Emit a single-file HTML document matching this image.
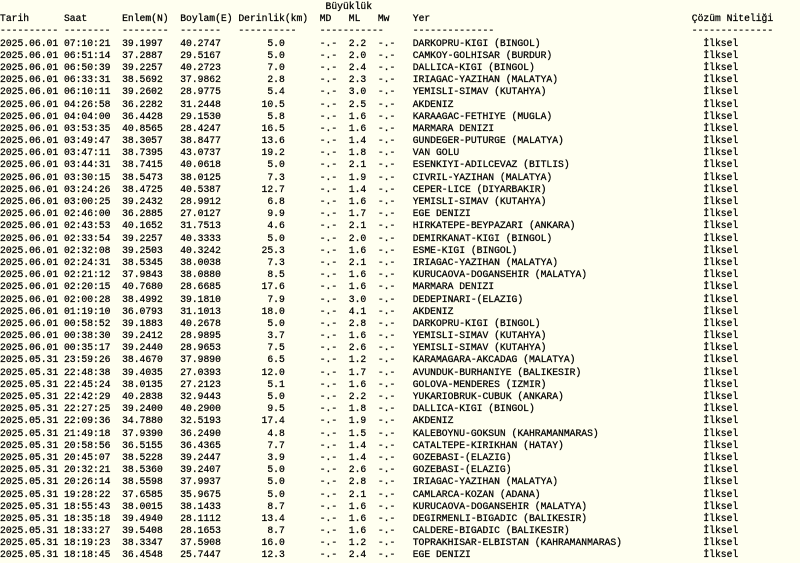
<!DOCTYPE html>
<html><head><meta charset="utf-8"><style>
html,body{margin:0;padding:0;background:#fffff0;width:800px;height:563px;overflow:hidden}
.w{font-family:"Liberation Mono",monospace;font-size:9.7px;line-height:12.19px;color:#000;padding-top:1px;-webkit-text-stroke:0.25px #000}
pre{margin:0;font:inherit;white-space:pre}
p{margin:0;height:12.19px;white-space:nowrap}
p b{font-weight:normal;display:inline-block}
p b:nth-child(1){width:11ch}
p b:nth-child(2){width:10ch}
p b:nth-child(3){width:10ch}
p b:nth-child(4){width:7ch}
p b:nth-child(5){width:11ch;text-align:right}
p b:nth-child(6){width:5ch;margin-left:6ch}
p b:nth-child(7){width:5ch}
p b:nth-child(8){width:6ch}
p b:nth-child(9){width:50ch}
</style></head><body><div class="w"><pre>                                                        Büyüklük
Tarih      Saat      Enlem(N)  Boylam(E) Derinlik(km)  MD   ML   Mw    Yer                                             Çözüm Niteliği
---------- --------  --------  -------   ----------    -----------     --------------                                  --------------</pre><p><b>2025.06.01</b><b>07:10:21</b><b>39.1997</b><b>40.2747</b><b>5.0</b><b>-.-</b><b>2.2</b><b>-.-</b><b>DARKOPRU-KIGI (BINGOL)</b><b>İlksel</b></p><p><b>2025.06.01</b><b>06:51:14</b><b>37.2887</b><b>29.5167</b><b>5.0</b><b>-.-</b><b>2.0</b><b>-.-</b><b>CAMKOY-GOLHISAR (BURDUR)</b><b>İlksel</b></p><p><b>2025.06.01</b><b>06:50:39</b><b>39.2257</b><b>40.2723</b><b>7.0</b><b>-.-</b><b>2.4</b><b>-.-</b><b>DALLICA-KIGI (BINGOL)</b><b>İlksel</b></p><p><b>2025.06.01</b><b>06:33:31</b><b>38.5692</b><b>37.9862</b><b>2.8</b><b>-.-</b><b>2.3</b><b>-.-</b><b>IRIAGAC-YAZIHAN (MALATYA)</b><b>İlksel</b></p><p><b>2025.06.01</b><b>06:10:11</b><b>39.2602</b><b>28.9775</b><b>5.4</b><b>-.-</b><b>3.0</b><b>-.-</b><b>YEMISLI-SIMAV (KUTAHYA)</b><b>İlksel</b></p><p><b>2025.06.01</b><b>04:26:58</b><b>36.2282</b><b>31.2448</b><b>10.5</b><b>-.-</b><b>2.5</b><b>-.-</b><b>AKDENIZ</b><b>İlksel</b></p><p><b>2025.06.01</b><b>04:04:00</b><b>36.4428</b><b>29.1530</b><b>5.8</b><b>-.-</b><b>1.6</b><b>-.-</b><b>KARAAGAC-FETHIYE (MUGLA)</b><b>İlksel</b></p><p><b>2025.06.01</b><b>03:53:35</b><b>40.8565</b><b>28.4247</b><b>16.5</b><b>-.-</b><b>1.6</b><b>-.-</b><b>MARMARA DENIZI</b><b>İlksel</b></p><p><b>2025.06.01</b><b>03:49:47</b><b>38.3057</b><b>38.8477</b><b>13.6</b><b>-.-</b><b>1.4</b><b>-.-</b><b>GUNDEGER-PUTURGE (MALATYA)</b><b>İlksel</b></p><p><b>2025.06.01</b><b>03:47:11</b><b>38.7395</b><b>43.0737</b><b>19.2</b><b>-.-</b><b>1.8</b><b>-.-</b><b>VAN GOLU</b><b>İlksel</b></p><p><b>2025.06.01</b><b>03:44:31</b><b>38.7415</b><b>40.0618</b><b>5.0</b><b>-.-</b><b>2.1</b><b>-.-</b><b>ESENKIYI-ADILCEVAZ (BITLIS)</b><b>İlksel</b></p><p><b>2025.06.01</b><b>03:30:15</b><b>38.5473</b><b>38.0125</b><b>7.3</b><b>-.-</b><b>1.9</b><b>-.-</b><b>CIVRIL-YAZIHAN (MALATYA)</b><b>İlksel</b></p><p><b>2025.06.01</b><b>03:24:26</b><b>38.4725</b><b>40.5387</b><b>12.7</b><b>-.-</b><b>1.4</b><b>-.-</b><b>CEPER-LICE (DIYARBAKIR)</b><b>İlksel</b></p><p><b>2025.06.01</b><b>03:00:25</b><b>39.2432</b><b>28.9912</b><b>6.8</b><b>-.-</b><b>1.6</b><b>-.-</b><b>YEMISLI-SIMAV (KUTAHYA)</b><b>İlksel</b></p><p><b>2025.06.01</b><b>02:46:00</b><b>36.2885</b><b>27.0127</b><b>9.9</b><b>-.-</b><b>1.7</b><b>-.-</b><b>EGE DENIZI</b><b>İlksel</b></p><p><b>2025.06.01</b><b>02:43:53</b><b>40.1652</b><b>31.7513</b><b>4.6</b><b>-.-</b><b>2.1</b><b>-.-</b><b>HIRKATEPE-BEYPAZARI (ANKARA)</b><b>İlksel</b></p><p><b>2025.06.01</b><b>02:33:54</b><b>39.2257</b><b>40.3333</b><b>5.0</b><b>-.-</b><b>2.0</b><b>-.-</b><b>DEMIRKANAT-KIGI (BINGOL)</b><b>İlksel</b></p><p><b>2025.06.01</b><b>02:32:08</b><b>39.2503</b><b>40.3242</b><b>25.3</b><b>-.-</b><b>1.6</b><b>-.-</b><b>ESME-KIGI (BINGOL)</b><b>İlksel</b></p><p><b>2025.06.01</b><b>02:24:31</b><b>38.5345</b><b>38.0038</b><b>7.3</b><b>-.-</b><b>2.1</b><b>-.-</b><b>IRIAGAC-YAZIHAN (MALATYA)</b><b>İlksel</b></p><p><b>2025.06.01</b><b>02:21:12</b><b>37.9843</b><b>38.0880</b><b>8.5</b><b>-.-</b><b>1.6</b><b>-.-</b><b>KURUCAOVA-DOGANSEHIR (MALATYA)</b><b>İlksel</b></p><p><b>2025.06.01</b><b>02:20:15</b><b>40.7680</b><b>28.6685</b><b>17.6</b><b>-.-</b><b>1.6</b><b>-.-</b><b>MARMARA DENIZI</b><b>İlksel</b></p><p><b>2025.06.01</b><b>02:00:28</b><b>38.4992</b><b>39.1810</b><b>7.9</b><b>-.-</b><b>3.0</b><b>-.-</b><b>DEDEPINARI-(ELAZIG)</b><b>İlksel</b></p><p><b>2025.06.01</b><b>01:19:10</b><b>36.0793</b><b>31.1013</b><b>18.0</b><b>-.-</b><b>4.1</b><b>-.-</b><b>AKDENIZ</b><b>İlksel</b></p><p><b>2025.06.01</b><b>00:58:52</b><b>39.1883</b><b>40.2678</b><b>5.0</b><b>-.-</b><b>2.8</b><b>-.-</b><b>DARKOPRU-KIGI (BINGOL)</b><b>İlksel</b></p><p><b>2025.06.01</b><b>00:38:30</b><b>39.2412</b><b>28.9895</b><b>3.7</b><b>-.-</b><b>1.6</b><b>-.-</b><b>YEMISLI-SIMAV (KUTAHYA)</b><b>İlksel</b></p><p><b>2025.06.01</b><b>00:35:17</b><b>39.2440</b><b>28.9653</b><b>7.5</b><b>-.-</b><b>2.6</b><b>-.-</b><b>YEMISLI-SIMAV (KUTAHYA)</b><b>İlksel</b></p><p><b>2025.05.31</b><b>23:59:26</b><b>38.4670</b><b>37.9890</b><b>6.5</b><b>-.-</b><b>1.2</b><b>-.-</b><b>KARAMAGARA-AKCADAG (MALATYA)</b><b>İlksel</b></p><p><b>2025.05.31</b><b>22:48:38</b><b>39.4035</b><b>27.0393</b><b>12.0</b><b>-.-</b><b>1.7</b><b>-.-</b><b>AVUNDUK-BURHANIYE (BALIKESIR)</b><b>İlksel</b></p><p><b>2025.05.31</b><b>22:45:24</b><b>38.0135</b><b>27.2123</b><b>5.1</b><b>-.-</b><b>1.6</b><b>-.-</b><b>GOLOVA-MENDERES (IZMIR)</b><b>İlksel</b></p><p><b>2025.05.31</b><b>22:42:29</b><b>40.2838</b><b>32.9443</b><b>5.0</b><b>-.-</b><b>2.2</b><b>-.-</b><b>YUKARIOBRUK-CUBUK (ANKARA)</b><b>İlksel</b></p><p><b>2025.05.31</b><b>22:27:25</b><b>39.2400</b><b>40.2900</b><b>9.5</b><b>-.-</b><b>1.8</b><b>-.-</b><b>DALLICA-KIGI (BINGOL)</b><b>İlksel</b></p><p><b>2025.05.31</b><b>22:09:36</b><b>34.7880</b><b>32.5193</b><b>17.4</b><b>-.-</b><b>1.9</b><b>-.-</b><b>AKDENIZ</b><b>İlksel</b></p><p><b>2025.05.31</b><b>21:49:18</b><b>37.9390</b><b>36.2490</b><b>4.8</b><b>-.-</b><b>1.5</b><b>-.-</b><b>KALEBOYNU-GOKSUN (KAHRAMANMARAS)</b><b>İlksel</b></p><p><b>2025.05.31</b><b>20:58:56</b><b>36.5155</b><b>36.4365</b><b>7.7</b><b>-.-</b><b>1.4</b><b>-.-</b><b>CATALTEPE-KIRIKHAN (HATAY)</b><b>İlksel</b></p><p><b>2025.05.31</b><b>20:45:07</b><b>38.5228</b><b>39.2447</b><b>3.9</b><b>-.-</b><b>1.4</b><b>-.-</b><b>GOZEBASI-(ELAZIG)</b><b>İlksel</b></p><p><b>2025.05.31</b><b>20:32:21</b><b>38.5360</b><b>39.2407</b><b>5.0</b><b>-.-</b><b>2.6</b><b>-.-</b><b>GOZEBASI-(ELAZIG)</b><b>İlksel</b></p><p><b>2025.05.31</b><b>20:26:14</b><b>38.5598</b><b>37.9937</b><b>5.0</b><b>-.-</b><b>2.8</b><b>-.-</b><b>IRIAGAC-YAZIHAN (MALATYA)</b><b>İlksel</b></p><p><b>2025.05.31</b><b>19:28:22</b><b>37.6585</b><b>35.9675</b><b>5.0</b><b>-.-</b><b>2.1</b><b>-.-</b><b>CAMLARCA-KOZAN (ADANA)</b><b>İlksel</b></p><p><b>2025.05.31</b><b>18:55:43</b><b>38.0015</b><b>38.1433</b><b>8.7</b><b>-.-</b><b>1.6</b><b>-.-</b><b>KURUCAOVA-DOGANSEHIR (MALATYA)</b><b>İlksel</b></p><p><b>2025.05.31</b><b>18:35:18</b><b>39.4940</b><b>28.1112</b><b>13.4</b><b>-.-</b><b>1.6</b><b>-.-</b><b>DEGIRMENLI-BIGADIC (BALIKESIR)</b><b>İlksel</b></p><p><b>2025.05.31</b><b>18:33:27</b><b>39.5408</b><b>28.1653</b><b>8.7</b><b>-.-</b><b>1.6</b><b>-.-</b><b>CALDERE-BIGADIC (BALIKESIR)</b><b>İlksel</b></p><p><b>2025.05.31</b><b>18:19:23</b><b>38.3347</b><b>37.5908</b><b>16.0</b><b>-.-</b><b>1.2</b><b>-.-</b><b>TOPRAKHISAR-ELBISTAN (KAHRAMANMARAS)</b><b>İlksel</b></p><p><b>2025.05.31</b><b>18:18:45</b><b>36.4548</b><b>25.7447</b><b>12.3</b><b>-.-</b><b>2.4</b><b>-.-</b><b>EGE DENIZI</b><b>İlksel</b></p></div></body></html>
